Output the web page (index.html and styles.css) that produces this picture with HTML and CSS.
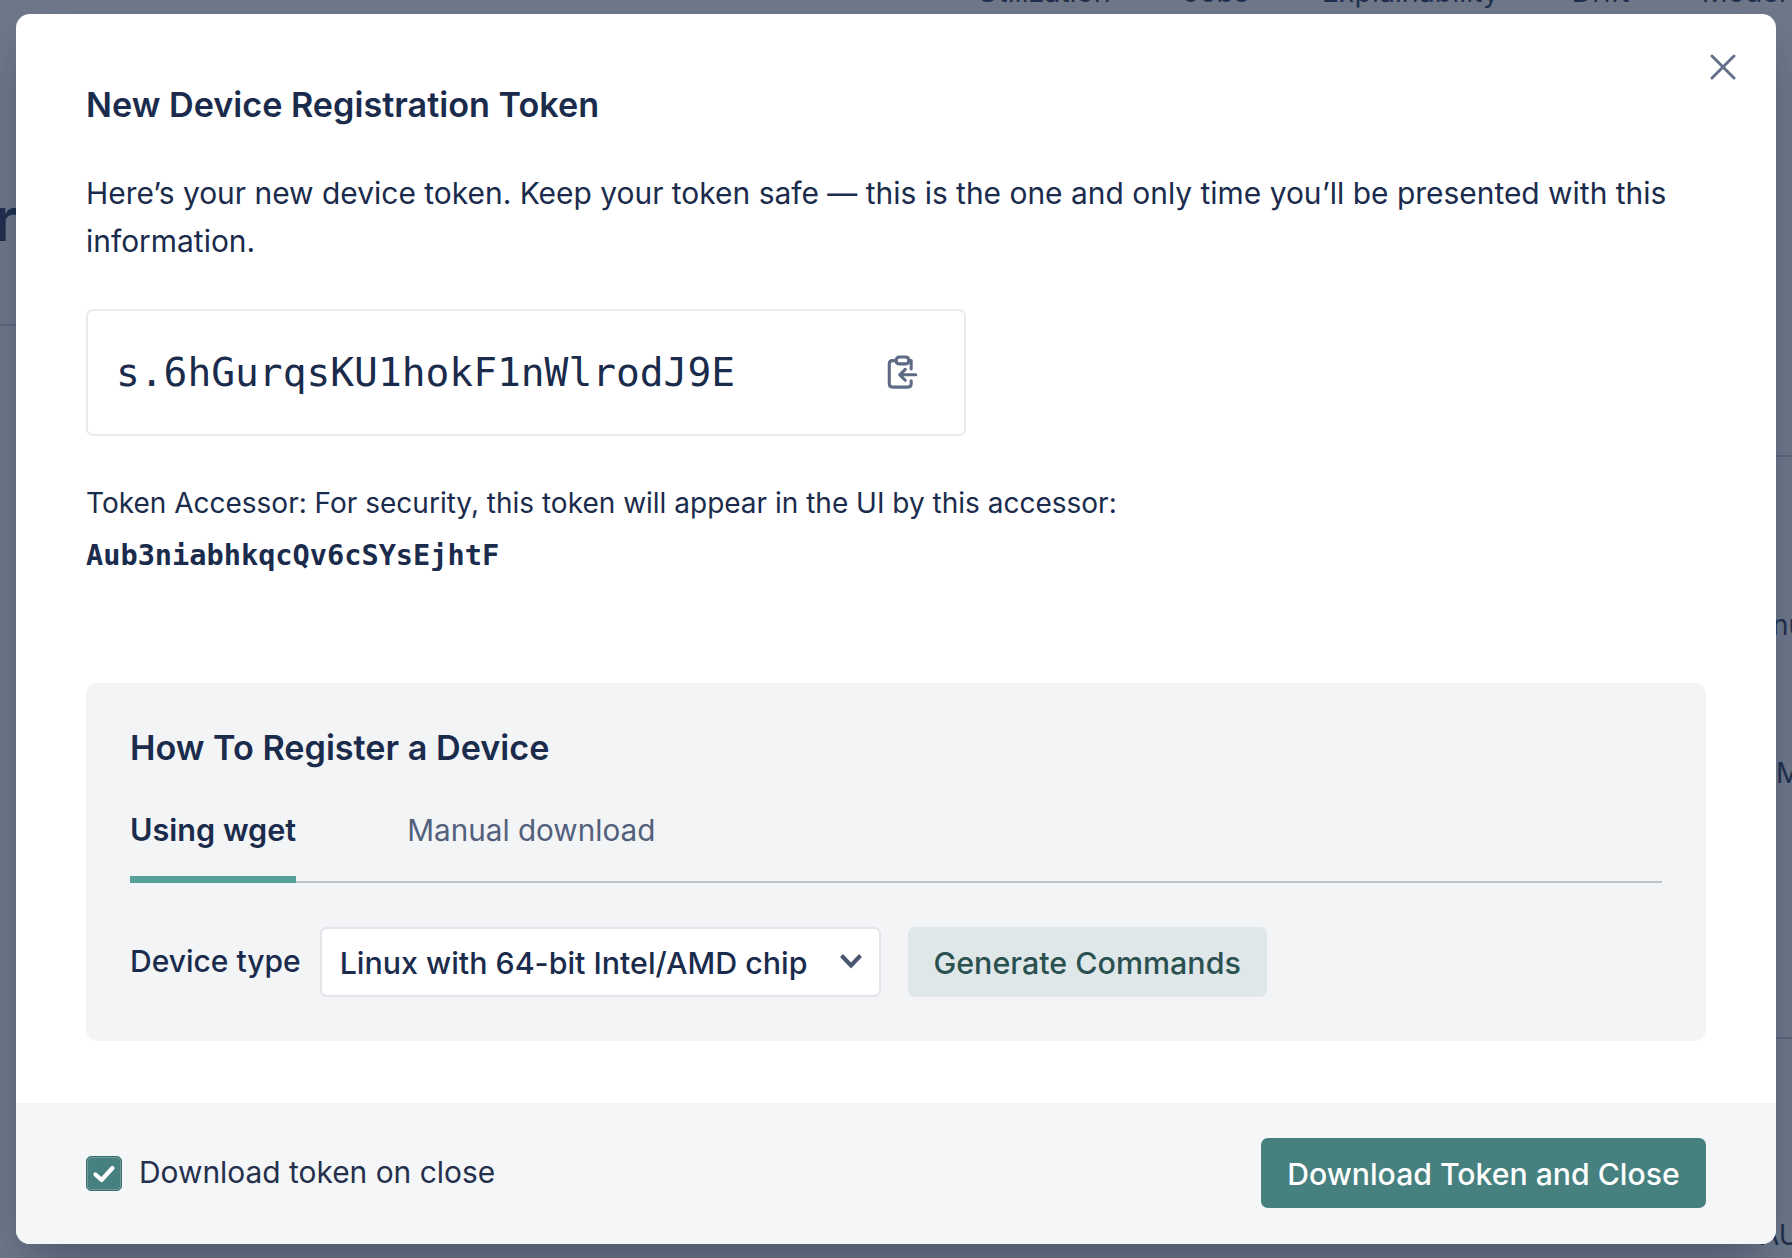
FILE: index.html
```html
<!DOCTYPE html>
<html lang="en">
<head>
<meta charset="utf-8">
<title>New Device Registration Token</title>
<link rel="stylesheet" href="styles.css">
</head>
<body>
<div class="page">
  <nav class="page-nav"><span>Utilization</span><span>Jobs</span><span>Explainability</span><span>Drift</span><span>Model</span></nav>
  <span class="frag frag-r">r</span>
  <span class="frag frag-nu">nu</span>
  <span class="frag frag-m">M</span>
  <span class="frag frag-au">AU</span>
  <span class="rule rule-left"></span>
  <span class="rule rule-right-a"></span>
  <span class="rule rule-right-b"></span>
</div>
<div class="overlay"></div>
<section class="modal">
  <button class="close" aria-label="Close">
    <svg width="26" height="26" viewBox="0 0 26 26"><path d="M2 2 L24 24 M24 2 L2 24" fill="none" stroke="#64708a" stroke-width="3" stroke-linecap="round"/></svg>
  </button>
  <div class="body">
    <h2 class="title">New Device Registration Token</h2>
    <p class="lead">Here’s your new device token. Keep your token safe — this is the one and only time you’ll be presented with this information.</p>
    <div class="token">
      <span class="token-value">s.6hGurqsKU1hokF1nWlrodJ9E</span>
      <svg class="copy" width="31" height="35" viewBox="0 0 34 38" fill="none" stroke="#5f6b85" stroke-width="3.4" stroke-linecap="round" stroke-linejoin="round">
        <path d="M10 6 H6 Q2.5 6 2.5 9.5 V31 Q2.5 35 6 35 H23 Q26.500 35 26.500 31 V28"/>
        <path d="M24 6 H26.500 V15"/>
        <path d="M10 6 Q10 2 14 2 H20 Q24 2 24 6 Q24 9.500 20 9.500 H14 Q10 9.500 10 6 Z"/>
        <path d="M31.500 21.500 H14 M20 15.500 L14 21.500 L20 27.500"/>
      </svg>
    </div>
    <p class="accessor-label">Token Accessor: For security, this token will appear in the UI by this accessor:</p>
    <p class="accessor-value">Aub3niabhkqcQv6cSYsEjhtF</p>
    <div class="howto">
      <h3 class="howto-title">How To Register a Device</h3>
      <div class="tabs">
        <span class="tab tab-active">Using wget</span>
        <span class="tab">Manual download</span>
      </div>
      <div class="controls">
        <span class="control-label">Device type</span>
        <div class="select">
          <span>Linux with 64-bit Intel/AMD chip</span>
          <svg width="24" height="16" viewBox="0 0 24 16"><path d="M2.500 2.500 L12 12.500 L21.500 2.500" fill="none" stroke="#4a5670" stroke-width="4"/></svg>
        </div>
        <button class="generate">Generate Commands</button>
      </div>
    </div>
  </div>
  <footer class="footer">
    <label class="check">
      <span class="box">
        <svg width="24" height="20" viewBox="0 0 24 20"><path d="M3.500 10.500 L9.500 16 L20.500 4" fill="none" stroke="#fff" stroke-width="4.200" stroke-linecap="round" stroke-linejoin="round"/></svg>
      </span>
      <span class="check-text">Download token on close</span>
    </label>
    <button class="primary">Download Token and Close</button>
  </footer>
</section>
</body>
</html>
```

FILE: styles.css
```css
* { box-sizing: border-box; }

html, body {
  margin: 0;
  height: 100%;
}

body {
  width: 1792px;
  height: 1258px;
  overflow: hidden;
  position: relative;
  background: #fff;
  font-family: Inter, "Liberation Sans", sans-serif;
  color: #1a2b4c;
}

.page {
  position: absolute;
  inset: 0;
}

.page-nav {
  display: flex;
  gap: 72.500px;
  margin-top: -23px;
  margin-left: 977px;
  white-space: nowrap;
  font-size: 28.600px;
  line-height: 30px;
}

.frag {
  position: absolute;
  color: #1a2b4c;
  font-size: 28px;
  line-height: 34px;
}

.frag-r { left: -6px; top: 184px; font-size: 60px; line-height: 70px; font-weight: 600; }
.frag-nu { left: 1772px; top: 608px; }
.frag-m { left: 1776px; top: 756px; }
.frag-au { left: 1760px; top: 1218px; }

.rule {
  position: absolute;
  height: 2px;
  background: #c6ccd6;
}

.rule-left { left: 0; width: 16px; top: 324px; }
.rule-right-a { left: 1776px; width: 16px; top: 455px; }
.rule-right-b { left: 1776px; width: 16px; top: 1037px; }

.overlay {
  position: absolute;
  inset: 0;
  background: rgba(35, 50, 78, .66);
}

.modal {
  position: absolute;
  left: 16px;
  top: 14px;
  width: 1760px;
  height: 1230px;
  display: flex;
  flex-direction: column;
  background: #fff;
  border-radius: 14px;
  overflow: hidden;
  box-shadow: 0 25px 50px -12px rgba(20, 30, 60, .42);
}

.close {
  position: absolute;
  top: 40px;
  right: 40px;
  padding: 0;
  border: 0;
  background: none;
  line-height: 0;
}

.body {
  flex: 1;
  padding: 70px 70px 0 70px;
}

.title {
  margin: 0 0 43px;
  font-size: 34.200px;
  line-height: 42px;
  font-weight: 600;
}

.lead {
  margin: 0 0 43.500px;
  font-size: 29.950px;
  line-height: 48px;
  font-weight: 400;
}

.token {
  width: 880px;
  height: 127px;
  display: flex;
  align-items: center;
  justify-content: space-between;
  padding: 0 46px 0 28px;
  border: 2px solid #e8eaef;
  border-radius: 7px;
}

.token-value {
  font-family: "DejaVu Sans Mono", "Liberation Mono", monospace;
  font-size: 39.560px;
}

.accessor-label {
  margin: 47.500px 0 0;
  font-size: 28px;
  line-height: 40px;
}

.accessor-value {
  margin: 12px 0 0;
  font-family: "DejaVu Sans Mono", "Liberation Mono", monospace;
  font-size: 28.600px;
  line-height: 40px;
  font-weight: 700;
}

.howto {
  margin-top: 108px;
  height: 358px;
  padding: 44px 44px 0;
  background: #f3f4f6;
  border-radius: 12px;
}

.howto-title {
  margin: 0 0 36px;
  font-size: 34.200px;
  line-height: 42px;
  font-weight: 600;
}

.tabs {
  display: flex;
  height: 78px;
  border-bottom: 2px solid #bcc3cb;
}

.tab {
  height: 78px;
  padding-top: 4.500px;
  margin-right: 111px;
  font-size: 29.700px;
  line-height: 40px;
  color: #52607c;
}

.tab-active {
  color: #1a2b4c;
  font-size: 30.600px;
  font-weight: 600;
  border-bottom: 7px solid #57a09a;
}

.controls {
  display: flex;
  align-items: center;
  margin-top: 44px;
}

.control-label {
  font-size: 30px;
  font-weight: 500;
  margin-right: 19px;
  padding-bottom: 2px;
}

.select {
  width: 561px;
  height: 70px;
  display: flex;
  align-items: center;
  justify-content: space-between;
  padding: 2px 16px 0 18px;
  background: #fff;
  border: 2px solid #e3e5ea;
  border-radius: 7px;
  font-size: 30.370px;
  font-weight: 500;
}

.select svg {
  margin-top: -4px;
}

.generate {
  width: 359px;
  height: 70px;
  margin-left: 27px;
  padding: 2px 0 0;
  border: 0;
  border-radius: 7px;
  background: #dfe7e9;
  color: #2a514f;
  font: 500 30.450px Inter, "Liberation Sans", sans-serif;
}

.footer {
  height: 141px;
  display: flex;
  align-items: center;
  justify-content: space-between;
  padding: 0 70px;
  background: #f5f6f8;
}

.check {
  display: flex;
  align-items: center;
  gap: 17px;
  font-size: 29.900px;
  color: #24304c;
}

.check-text {
  padding-bottom: 4px;
}

.box {
  width: 36px;
  height: 35px;
  display: flex;
  align-items: center;
  justify-content: center;
  background: #46807f;
  border: 1px solid #3c7170;
  border-radius: 5px;
  box-shadow: inset 0 0 0 1px rgba(255, 255, 255, .22);
}

.primary {
  width: 445px;
  height: 70px;
  margin-top: -2px;
  padding: 2px 0 0;
  border: 0;
  border-radius: 7px;
  background: #46807f;
  color: #fff;
  font: 500 30.200px Inter, "Liberation Sans", sans-serif;
}
```
